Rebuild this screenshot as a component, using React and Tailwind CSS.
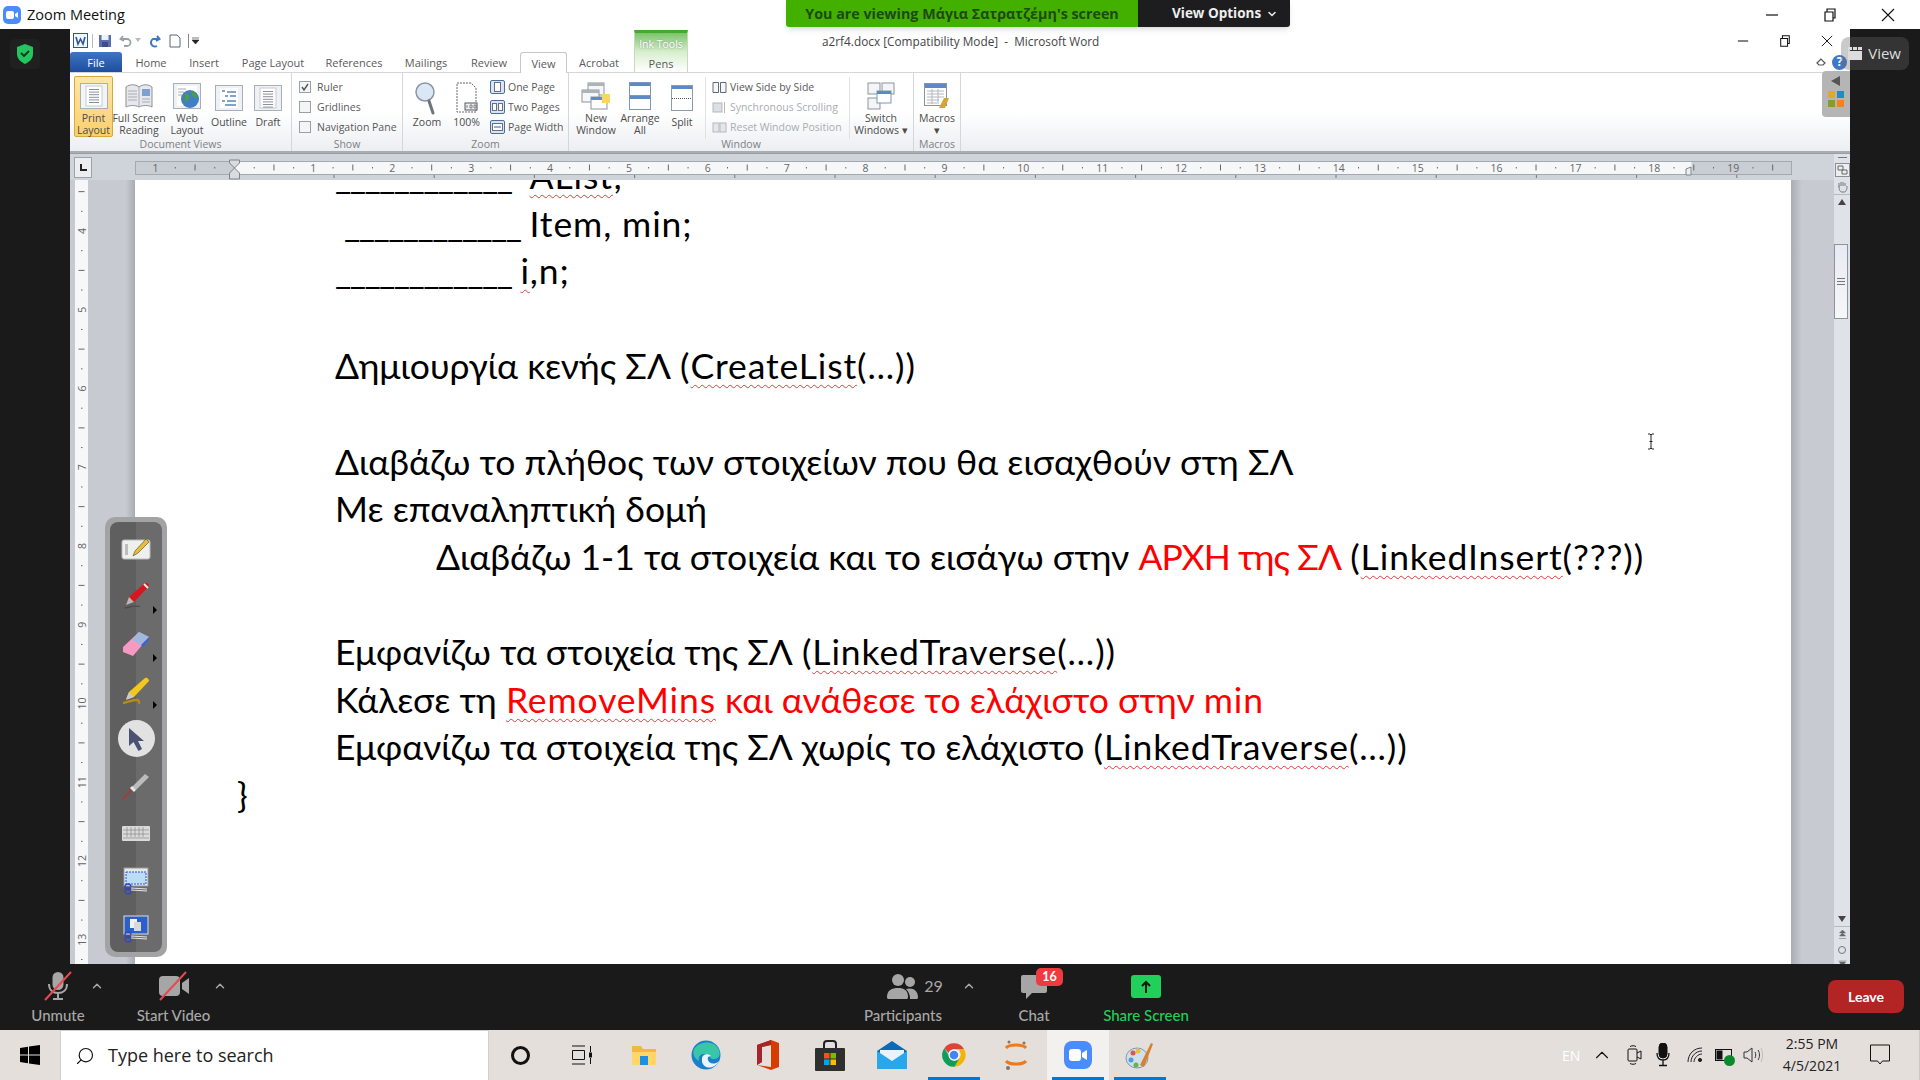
import { ChevronUp, ChevronDown, Search } from "lucide-react";

const uiFont = { fontFamily: '"Open Sans", "Noto Sans", sans-serif' };

const tabs = [
  ["Home", "w-[58px]"],
  ["Insert", "w-[48px]"],
  ["Page Layout", "w-[90px]"],
  ["References", "w-[72px]"],
  ["Mailings", "w-[72px]"],
  ["Review", "w-[54px]"],
];

function WinButtons({ size, gap, className }) {
  return (
    <div className={"flex items-center " + className} style={{ gap }}>
      <svg width={size} height={size} viewBox="0 0 14 14" fill="none" stroke="#111" strokeWidth="1.2"><path d="M1 7h12" /></svg>
      <svg width={size} height={size} viewBox="0 0 14 14" fill="none" stroke="#111" strokeWidth="1.2"><path d="M2 4h8v9H2zM4 4V1h8v9h-2" /></svg>
      <svg width={size} height={size} viewBox="0 0 14 14" fill="none" stroke="#111" strokeWidth="1.1"><path d="M1 1l12 12M13 1L1 13" /></svg>
    </div>
  );
}

function PageIcon({ lines = 6, open, globe, outline, active }) {
  return (
    <svg width="28" height="26" viewBox="0 0 28 26">
      {!open && <rect x="0.5" y="0.5" width="27" height="25" fill={active ? "#f3f4f4" : "#eef1f5"} stroke="#a9afb8" />}
      {open ? (
        <>
          <path d="M1 4c4-3 9-3 13 0c4-3 9-3 13 0v20c-4-2-9-2-13 0c-4-2-9-2-13 0z" fill="#e6e8ec" stroke="#8a8f98" />
          <path d="M14 4v20M3 8h9M3 11h9M3 14h9M3 17h9" stroke="#a6abb3" />
          <rect x="17" y="6" width="8" height="7" fill="#7da0d0" />
          <path d="M17 16h8M17 19h8" stroke="#a6abb3" />
        </>
      ) : globe ? (
        <>
          <rect x="4" y="3" width="20" height="20" fill="#fff" />
          <path d="M5 6h8M5 9h6M5 12h4" stroke="#a6abb3" />
          <circle cx="17" cy="16" r="9" fill="#3f7fc4" />
          <path d="M12 10c3 1 5 3 4 6c-1 2-3 1-4 4zM18 8c3 1 6 3 6 7c-2 0-6-2-6-7z" fill="#4fa12f" />
        </>
      ) : outline ? (
        <>
          <rect x="5" y="3" width="18" height="20" fill="#fff" />
          <path d="M7 6h3M12 7h9M10 11h3M15 11h6M7 16h3M12 16h9M10 20h11" stroke="#5b86b8" strokeWidth="1.4" />
        </>
      ) : (
        <>
          <rect x="6" y="3" width="16" height="20" fill="#fff" stroke="#c7cbd1" />
          {Array.from({ length: lines }).map((_, i) => (
            <path key={i} d={`M9 ${6.5 + i * 2.6}h10`} stroke="#8b919a" strokeWidth="1" />
          ))}
        </>
      )}
    </svg>
  );
}

function BigButton({ icon, label, label2, width, active }) {
  return (
    <div
      className={
        "flex flex-col items-center h-[61px] text-[10.5px] leading-[12px] text-[#4c4c4c] shrink-0 " +
        width +
        (active ? " rounded-[2px] border border-[#d9a83e] bg-gradient-to-b from-[#fde7a8] to-[#fbcf6a]" : " border border-transparent")
      }
    >
      <div className="h-[35px] mt-[3px] flex items-center justify-center">{icon}</div>
      <span className="whitespace-nowrap mt-[1px]">{label}</span>
      {label2 && <span className="whitespace-nowrap">{label2}</span>}
    </div>
  );
}

function Group({ title, width, children }) {
  return (
    <div className={"flex flex-col h-full shrink-0 border-r border-[#d3d6da] " + width}>
      <div className="flex-1 flex pt-[3px] min-h-0">{children}</div>
      <div className="h-[14px] text-center text-[10.5px] leading-[14px] text-[#7d8185]">{title}</div>
    </div>
  );
}

function CheckRow({ label, checked }) {
  return (
    <div className="flex items-center gap-[6px] h-[20px] text-[10.5px] leading-[14px] text-[#595959]">
      <div className="w-[12px] h-[12px] border border-[#9aa0a8] bg-[#f4f5f6] flex items-center justify-center">
        {checked && (
          <svg width="10" height="10" viewBox="0 0 10 10" fill="none" stroke="#555" strokeWidth="1.4"><path d="M2 5l2 3l4-6" /></svg>
        )}
      </div>
      <span className="whitespace-nowrap">{label}</span>
    </div>
  );
}

function SmallRow({ icon, label, dim }) {
  return (
    <div className={"flex items-center gap-[3px] h-[20px] text-[10.5px] leading-[14px] whitespace-nowrap " + (dim ? "text-[#a9adb2]" : "text-[#595959]")}>
      <div className="w-[15px] h-[14px] flex items-center justify-center">{icon}</div>
      <span>{label}</span>
    </div>
  );
}

function MiniPages({ n = 1 }) {
  return (
    <svg width="15" height="14" viewBox="0 0 15 14">
      <rect x="0.5" y="0.5" width="14" height="13" rx="1.5" fill="#dbe5f2" stroke="#4a6f9e" />
      {n === 1 ? (
        <rect x="4.5" y="2.5" width="6" height="9" fill="#fff" stroke="#67707b" />
      ) : n === 2 ? (
        <>
          <rect x="2.5" y="3.5" width="4" height="7" fill="#fff" stroke="#67707b" />
          <rect x="8.5" y="3.5" width="4" height="7" fill="#fff" stroke="#67707b" />
        </>
      ) : (
        <>
          <rect x="2.5" y="3.5" width="10" height="7" fill="#fff" stroke="#67707b" />
          <path d="M4 7h7" stroke="#2a5f9e" />
        </>
      )}
    </svg>
  );
}

function WindowPane({ kind }) {
  if (kind === "new")
    return (
      <svg width="30" height="28" viewBox="0 0 30 28">
        <rect x="7" y="1" width="16" height="12" fill="#f6f7f8" stroke="#8d939b" />
        <rect x="7" y="1" width="16" height="3" fill="#aeb3ba" />
        <rect x="1" y="8" width="17" height="12" fill="#f6f7f8" stroke="#8d939b" />
        <rect x="1" y="8" width="17" height="3" fill="#aeb3ba" />
        <rect x="10" y="15" width="16" height="12" fill="#fff" stroke="#8d939b" />
        <rect x="10" y="15" width="16" height="3" fill="#5c8ccc" />
        <rect x="21" y="12" width="8" height="9" fill="#f7d861" />
      </svg>
    );
  if (kind === "arrange")
    return (
      <svg width="22" height="28" viewBox="0 0 22 28">
        <rect x="0.5" y="0.5" width="21" height="13" fill="#fff" stroke="#7e97b6" />
        <rect x="1" y="1" width="20" height="3" fill="#5b8ac7" />
        <rect x="0.5" y="13.5" width="21" height="14" fill="#fff" stroke="#7e97b6" />
        <rect x="1" y="14" width="20" height="3" fill="#5b8ac7" />
      </svg>
    );
  if (kind === "split")
    return (
      <svg width="22" height="26" viewBox="0 0 22 26">
        <rect x="0.5" y="0.5" width="21" height="25" fill="#fff" stroke="#8d9aa8" />
        <rect x="1" y="1" width="20" height="3" fill="#5b8ac7" />
        <path d="M1 13.5h20" stroke="#555" strokeDasharray="1 1" />
      </svg>
    );
  return (
    <svg width="28" height="28" viewBox="0 0 28 28">
      <rect x="1" y="1" width="12" height="11" fill="#f4f5f6" stroke="#8d939b" />
      <rect x="15" y="1" width="12" height="11" fill="#f4f5f6" stroke="#8d939b" />
      <rect x="1" y="16" width="12" height="11" fill="#f4f5f6" stroke="#8d939b" />
      <rect x="10" y="9" width="14" height="12" fill="#fff" stroke="#7e97b6" />
      <rect x="10" y="9" width="14" height="3" fill="#5b8ac7" />
    </svg>
  );
}

function Ribbon() {
  return (
    <div className="h-[80px] flex bg-gradient-to-b from-white via-white to-[#eceef1] border-b-2 border-[#a9adb3] shrink-0" style={uiFont}>
      <Group title="Document Views" width="w-[222px]">
        <div className="flex pl-[4px]">
          <BigButton width="w-[39px]" active icon={<PageIcon active />} label="Print" label2="Layout" />
          <BigButton width="w-[52px]" icon={<PageIcon open />} label="Full Screen" label2="Reading" />
          <BigButton width="w-[44px]" icon={<PageIcon globe />} label="Web" label2="Layout" />
          <BigButton width="w-[40px]" icon={<PageIcon outline />} label="Outline" />
          <BigButton width="w-[38px]" icon={<PageIcon lines={7} />} label="Draft" />
        </div>
      </Group>
      <Group title="Show" width="w-[111px]">
        <div className="flex flex-col pl-[7px] pt-[1px]">
          <CheckRow label="Ruler" checked />
          <CheckRow label="Gridlines" />
          <CheckRow label="Navigation Pane" />
        </div>
      </Group>
      <Group title="Zoom" width="w-[166px]">
        <div className="flex pl-[4px]">
          <BigButton
            width="w-[40px]"
            icon={
              <svg width="24" height="34" viewBox="0 0 24 34">
                <circle cx="10" cy="11" r="9" fill="#dbe7f5" stroke="#8a96a5" strokeWidth="1.5" />
                <path d="M14 20l4 12" stroke="#6e747b" strokeWidth="3" strokeLinecap="round" />
              </svg>
            }
            label="Zoom"
          />
          <BigButton
            width="w-[39px]"
            icon={
              <svg width="24" height="32" viewBox="0 0 24 32" fill="none">
                <path d="M2 1h14l5 5v24H2z" fill="#fff" stroke="#666" strokeDasharray="2 1" />
                <rect x="10" y="21" width="12" height="7" fill="#eef1f5" stroke="#555" />
                <path d="M12 26v-3M15 23h2v3h-2zM19 23h2v3h-2z" stroke="#555" strokeWidth="0.7" />
              </svg>
            }
            label="100%"
          />
          <div className="flex flex-col pl-[4px] pt-[1px]">
            <SmallRow icon={<MiniPages n={1} />} label="One Page" />
            <SmallRow icon={<MiniPages n={2} />} label="Two Pages" />
            <SmallRow icon={<MiniPages n={3} />} label="Page Width" />
          </div>
        </div>
      </Group>
      <Group title="Window" width="w-[345px]">
        <div className="flex pl-[7px]">
          <BigButton width="w-[40px]" icon={<WindowPane kind="new" />} label="New" label2="Window" />
          <BigButton width="w-[48px]" icon={<WindowPane kind="arrange" />} label="Arrange" label2="All" />
          <BigButton width="w-[36px]" icon={<WindowPane kind="split" />} label="Split" />
          <div className="w-px h-[62px] bg-[#dfe1e4] ml-[5px] mt-[1px]" />
          <div className="flex flex-col pl-[6px] pt-[1px] w-[143px]">
            <SmallRow
              icon={
                <svg width="15" height="13" viewBox="0 0 15 13" fill="none" stroke="#5f6a76"><path d="M1 1.5h5.5v10H1zM8.5 1.5H14v10H8.5z" fill="#f6f7f9" /></svg>
              }
              label="View Side by Side"
            />
            <SmallRow
              dim
              icon={
                <svg width="15" height="13" viewBox="0 0 15 13" stroke="#b4b8bd"><rect x="1" y="2" width="9" height="9" fill="#dcdfe3" /><path d="M12.5 1v11" /></svg>
              }
              label="Synchronous Scrolling"
            />
            <SmallRow
              dim
              icon={
                <svg width="15" height="13" viewBox="0 0 15 13" stroke="#b4b8bd"><rect x="1" y="2" width="6" height="9" fill="#e4e6e9" /><rect x="8" y="2" width="6" height="9" fill="#e4e6e9" /></svg>
              }
              label="Reset Window Position"
            />
          </div>
          <div className="w-px h-[62px] bg-[#dfe1e4] mt-[1px]" />
          <BigButton width="w-[62px]" icon={<WindowPane kind="switch" />} label="Switch" label2="Windows ▾" />
        </div>
      </Group>
      <Group title="Macros" width="w-[47px]">
        <BigButton
          width="w-full"
          icon={
            <svg width="26" height="28" viewBox="0 0 26 28">
              <rect x="0.5" y="1.5" width="22" height="22" fill="#fff" stroke="#8d939b" />
              <rect x="1" y="2" width="21" height="4" fill="#5b8ac7" />
              <path d="M3 9h17M3 12h17M3 15h17M3 18h12M3 21h10M8 7v15M14 7v15" stroke="#b3b8bf" />
              <path d="M15 26l5-10h5l-4 10z" fill="#d6a535" />
            </svg>
          }
          label="Macros"
          label2="▾"
        />
      </Group>
    </div>
  );
}

function HRuler() {
  const unit = 78.88;
  const zero = 99.5;
  const nums = [];
  for (let n = -1; n <= 19; n++) if (n !== 0) nums.push(n);
  const ticks = [];
  for (let i = -4; i <= 78; i++) if (i % 4 !== 0) ticks.push(i);
  return (
    <div className="h-[27px] bg-[#cfd3da] flex shrink-0 border-t border-[#9a9ea4]">
      <div className="w-[4px]" />
      <div className="w-[18px] h-[21px] mt-[3px] border border-[#9ea3aa] bg-[#eceef1] flex items-center justify-center shrink-0">
        <svg width="9" height="9" viewBox="0 0 9 9"><path d="M2 1v6h6" fill="none" stroke="#222" strokeWidth="2" /></svg>
      </div>
      <div className="w-[43px]" />
      <svg width="1660" height="26" viewBox="0 0 1660 26" className="shrink-0">
        <rect x="0.5" y="7.5" width="1656" height="13" fill="#c9cdd4" stroke="#a4a8af" />
        <rect x={zero} y="8" width="1457" height="12" fill="#f6f7f8" />
        {ticks.map((i) => {
          const x = zero + (i * unit) / 4;
          if (x < 3 || x > 1654) return null;
          return i % 2 === 0 ? (
            <path key={i} d={`M${x} 10.5v6`} stroke="#666" />
          ) : (
            <path key={i} d={`M${x} 13v1.5`} stroke="#666" />
          );
        })}
        {nums.map((n) => (
          <text key={n} x={zero + n * unit} y="18" textAnchor="middle" fontSize="10.5" fill="#666" style={uiFont}>
            {Math.abs(n)}
          </text>
        ))}
        {Array.from({ length: 16 }).map((_, i) => (
          <path key={i} d={`M${199 + i * 100.2} 21v3`} stroke="#777" />
        ))}
        <path d={`M${zero - 5} 6h10v3l-5 5l-5-5z`} fill="#d8dbe0" stroke="#808489" />
        <path d={`M${zero} 14l5 5v6h-10v-6z`} fill="#d8dbe0" stroke="#808489" />
        <path d="M1551 21v-6l5-2v8z" fill="#eceef1" stroke="#808489" />
      </svg>
      <div className="flex-1" />
      <div className="w-[16px] bg-[#dfe2e8] flex flex-col items-center shrink-0 pt-[3px]">
        <div className="w-[9px] h-px bg-[#777]" />
        <div className="mt-[5px] w-[15px] h-[14px] border border-[#8a8f96] bg-[#eceef1] flex items-center justify-center">
          <svg width="11" height="10" viewBox="0 0 11 10" fill="none" stroke="#666"><path d="M1 1h5v4H1zM5 5h5v4H5z" /></svg>
        </div>
      </div>
    </div>
  );
}

function VRuler() {
  const unit = 78.75;
  const nums = [3, 4, 5, 6, 7, 8, 9, 10, 11, 12, 13];
  const top = 231 - 180 - 78.75;
  const ticks = [];
  for (let i = 0; i < 52; i++) if (i % 4 !== 0) ticks.push(i);
  return (
    <svg width="13" height="784" viewBox="0 0 13 784" className="shrink-0 bg-[#f6f7f8]">
      {ticks.map((i) => {
        const y = top + (i * unit) / 4;
        return i % 2 === 0 ? (
          <path key={i} d={`M3.5 ${y}h6`} stroke="#666" />
        ) : (
          <path key={i} d={`M6 ${y}h1.5`} stroke="#666" />
        );
      })}
      {nums.map((n, i) => {
        const y = top + i * unit;
        return (
          <text key={n} x="6.5" y={y} textAnchor="middle" dominantBaseline="central" fontSize="10.5" fill="#666" transform={`rotate(-90 6.5 ${y})`} style={uiFont}>
            {n}
          </text>
        );
      })}
    </svg>
  );
}

function Lat({ children }) {
  return <span className="tracking-[0.9px]">{children}</span>;
}

function Wavy({ children }) {
  return <span className="underline decoration-wavy decoration-[#e5383b] decoration-1 underline-offset-[5px]">{children}</span>;
}

function Blank() {
  return <span className="tracking-[-1.6px]">____________</span>;
}

function Line({ children, className = "" }) {
  return <div className={"h-[47.6px] leading-[47.6px] whitespace-pre " + className}>{children}</div>;
}

function Paper() {
  return (
    <div
      className="flex-1 bg-white overflow-hidden pl-[200px] text-black text-[35.5px]"
      style={{ fontFamily: '"Lato", "Open Sans", sans-serif' }}
    >
      <div className="-mt-[28px]">
        <Line><Blank />  <Lat><Wavy>AList</Wavy>;</Lat></Line>
        <Line> <Blank /> <Lat>Item, min;</Lat></Line>
        <Line><Blank /> <Lat><Wavy>i</Wavy>,n;</Lat></Line>
        <Line />
        <Line>Δημιουργία κενής ΣΛ <Lat>(<Wavy>CreateList</Wavy>(…))</Lat></Line>
        <Line />
        <Line>Διαβάζω το πλήθος των στοιχείων που θα εισαχθούν στη ΣΛ</Line>
        <Line>Με επαναληπτική δομή</Line>
        <Line className="pl-[101px]">
          Διαβάζω 1-1 τα στοιχεία και το εισάγω στην <span className="text-[#f00] tracking-[-0.9px]">ΑΡΧΗ της ΣΛ</span> <Lat>(<Wavy>LinkedInsert</Wavy>(???))</Lat>
        </Line>
        <Line />
        <Line>Εμφανίζω τα στοιχεία της ΣΛ <Lat>(<Wavy>LinkedTraverse</Wavy>(…))</Lat></Line>
        <Line>
          Κάλεσε τη <span className="text-[#f00]"><Lat><Wavy>RemoveMins</Wavy></Lat> και ανάθεσε το ελάχιστο στην <Lat>min</Lat></span>
        </Line>
        <Line>Εμφανίζω τα στοιχεία της ΣΛ χωρίς το ελάχιστο <Lat>(<Wavy>LinkedTraverse</Wavy>(…))</Lat></Line>
        <Line className="-ml-[98px]">{"}"}</Line>
      </div>
    </div>
  );
}

function Scrollbar() {
  return (
    <div className="w-[16px] bg-[#dfe2e8] flex flex-col items-center shrink-0">
      <svg width="13" height="13" viewBox="0 0 13 13" fill="none" stroke="#777" className="shrink-0"><path d="M3 7V3M5 6V2M7 6V2M9 6V3M3 6c0 4 1 6 3 6h2c2 0 3-2 3-6" /></svg>
      <div className="w-full h-px bg-[#b5b9c0] mt-[1px]" />
      <svg width="10" height="8" viewBox="0 0 10 8" className="mt-[3px] shrink-0"><path d="M5 1l4 6H1z" fill="#444" /></svg>
      <div className="mt-[38px] h-[75px] w-[14px] -ml-[2px] bg-gradient-to-b from-[#e8ebf2] to-[#f6f7f9] border border-[#8d939b] flex items-center justify-center shrink-0">
        <div className="w-[8px] h-[7px] border-y border-[#777] relative">
          <div className="absolute left-0 right-0 top-[2px] h-px bg-[#777]" />
        </div>
      </div>
      <div className="flex-1" />
      <svg width="10" height="8" viewBox="0 0 10 8" className="shrink-0"><path d="M5 7l4-6H1z" fill="#444" /></svg>
      <div className="w-full h-px bg-[#b5b9c0] mt-[3px]" />
      <svg width="9" height="10" viewBox="0 0 9 10" className="mt-[3px] shrink-0"><path d="M4.5 0l3 3h-6zM4.5 3l3 3h-6zM1 8.5h7" fill="#666" stroke="#666" strokeWidth="0.5" /></svg>
      <svg width="10" height="10" viewBox="0 0 10 10" className="mt-[5px] shrink-0"><circle cx="5" cy="5" r="3.5" fill="none" stroke="#777" /></svg>
      <svg width="9" height="8" viewBox="0 0 9 8" className="mt-[5px] mb-[-4px] shrink-0"><path d="M0.5 1h8M4.5 7l3-5h-6z" fill="#666" stroke="#666" strokeWidth="0.5" /></svg>
    </div>
  );
}

function WordWindow() {
  return (
    <div className="w-[1780px] bg-white flex flex-col relative shrink-0">
      <div className="h-[23px] flex items-center pl-[3px] shrink-0">
        <svg width="15" height="15" viewBox="0 0 15 15"><rect x="0.5" y="0.5" width="14" height="14" fill="#f3f6fa" stroke="#2b579a" /><path d="M3 4l2 7l2.5-5l2.5 5l2-7" fill="none" stroke="#2b579a" strokeWidth="1.6" /></svg>
        <div className="w-px h-[14px] bg-[#b7bbc0] ml-[4px] mr-[5px]" />
        <svg width="14" height="14" viewBox="0 0 14 14"><rect x="1" y="1" width="12" height="12" fill="#5a6fb0" /><rect x="3.5" y="1" width="7" height="5" fill="#eef1f7" /><rect x="4" y="8" width="6" height="5" fill="#3f4f85" /></svg>
        <svg width="14" height="14" viewBox="0 0 14 14" fill="none" className="ml-[7px]"><path d="M4 2L1.5 5L5 7M2 5h6a3 3 0 010 7H5" stroke="#9aa0a8" strokeWidth="1.8" /></svg>
        <svg width="6" height="5" viewBox="0 0 6 5" className="ml-[2px]"><path d="M0 0h6L3 4z" fill="#bbb" /></svg>
        <svg width="14" height="14" viewBox="0 0 14 14" fill="none" className="ml-[6px]"><path d="M10 2L12.5 5L9 7M12 5H6a4 4 0 104 7" stroke="#3d77c4" strokeWidth="2" /></svg>
        <svg width="12" height="14" viewBox="0 0 12 14" className="ml-[8px]"><path d="M1 1h7l3 3v9H1z" fill="#fff" stroke="#5b6470" /></svg>
        <div className="w-px h-[14px] bg-[#888] ml-[7px] mr-[3px]" />
        <svg width="7" height="8" viewBox="0 0 7 8"><path d="M0 1h7M0 3h7l-3.5 4z" fill="#222" stroke="#222" strokeWidth="0.6" /></svg>
        <div className="w-[623px]" />
        <span className="text-[11.8px] text-[#444] whitespace-pre pt-[2px]" style={uiFont}>a2rf4.docx [Compatibility Mode]  -  Microsoft Word</span>
        <div className="flex-1" />
        <WinButtons size={12} gap={30} className="pr-[17px]" />
      </div>
      <div className="h-[21px] flex items-stretch shrink-0 text-[11px] text-[#5a5a5a] border-b border-[#d4d6da]" style={uiFont}>
        <div className="w-[52px] rounded-t-[3px] bg-gradient-to-b from-[#3f73c4] to-[#1e4f9e] text-white flex items-center justify-center pt-[2px]">File</div>
        {tabs.map(([name, w]) => (
          <div key={name} className={w + " flex items-center justify-center whitespace-nowrap pt-[2px]"}>{name}</div>
        ))}
        <div className="w-[47px] -mb-px ml-[4px] bg-white border border-b-0 border-[#c4c7cc] rounded-t-[3px] flex items-center justify-center pt-[2px]">View</div>
        <div className="w-[64px] flex items-center justify-center pt-[2px]">Acrobat</div>
        <div className="w-[54px] ml-[3px] -mt-[22px] border-x border-[#c5dcb9] flex flex-col items-center bg-gradient-to-b from-[#7bc46a] via-[#d9efd0] to-white border-t-[3px] border-t-[#45a82f]">
          <span className="h-[20px] flex items-end text-white text-[10.5px] [text-shadow:0_0_2px_#888]">Ink Tools</span>
          <span className="h-[20px] flex items-end">Pens</span>
        </div>
        <div className="flex-1" />
        <div className="flex items-center gap-[6px] pr-[3px]">
          <svg width="10" height="10" viewBox="0 0 10 10" fill="none" stroke="#555" strokeWidth="1.2"><path d="M1 6l4-4l4 4l-2 2H3z" /></svg>
          <div className="w-[15px] h-[15px] rounded-full bg-[#3f78c8] text-white text-[12px] font-bold flex items-center justify-center">?</div>
        </div>
      </div>
      <Ribbon />
      <HRuler />
      <div className="flex-1 flex min-h-0 bg-[#c7cbd1]">
        <div className="w-[5px]" />
        <VRuler />
        <div className="w-[47px] bg-gradient-to-r from-[#c7cbd1] from-[80%] to-[#a9adb3]" />
        <Paper />
        <div className="w-[43px] bg-gradient-to-r from-[#a9adb3] to-[#c7cbd1] to-[25%]" />
        <Scrollbar />
      </div>
      {/* floating add-in palette */}
      <div className="absolute right-0 top-[42px] w-[28px] h-[46px] bg-[#b5b5b5] rounded-l-[4px] flex flex-col items-center pt-[5px]">
        <svg width="10" height="10" viewBox="0 0 10 10"><path d="M9 0v10L0 5z" fill="#555" /></svg>
        <div className="grid grid-cols-2 gap-[2px] mt-[5px]">
          <div className="w-[7px] h-[7px] bg-[#e5a91e]" />
          <div className="w-[7px] h-[7px] bg-[#1b8fc0]" />
          <div className="w-[7px] h-[7px] bg-[#8a9a2e]" />
          <div className="w-[7px] h-[7px] bg-[#ee8427]" />
        </div>
      </div>
      <div className="absolute left-[1577px] top-[404px]">
        <svg width="8" height="17" viewBox="0 0 8 17" fill="none" stroke="#222"><path d="M1 1h2l1 1l1-1h2M4 2v13M1 16h2l1-1l1 1h2M2.5 8.5h3" /></svg>
      </div>
    </div>
  );
}

function Tool({ children, arrow }) {
  return (
    <div className="h-[47.5px] w-full flex items-center justify-center relative shrink-0">
      {children}
      {arrow && <div className="absolute right-[5px] bottom-[6px] w-0 h-0 border-y-[4px] border-y-transparent border-l-[4px] border-l-black" />}
    </div>
  );
}

function AnnotateBar() {
  return (
    <div className="absolute left-[105px] top-[517px] w-[62px] h-[440px] rounded-[10px] bg-[#a3a3a6] p-[5px]">
      <div className="w-full h-full rounded-[8px] bg-gradient-to-r from-[#5f5f5f] from-50% to-[#6b6b6b] to-50% flex flex-col items-center pt-[3px]">
        <Tool>
          <svg width="30" height="24" viewBox="0 0 30 24"><rect x="1" y="3" width="28" height="19" rx="2" fill="#eef0ee" stroke="#bbb" /><rect x="4" y="7" width="3" height="11" fill="#bdbdbd" /><path d="M12 19l2-5L25 2l3 3l-11 11z" fill="#e7bd3a" stroke="#6b5b20" strokeWidth="0.7" /></svg>
        </Tool>
        <Tool arrow>
          <svg width="30" height="30" viewBox="0 0 30 30"><path d="M5 23l3-7L24 2c2-1 4 1 4 3L13 21z" fill="#d9161d" /><path d="M23 3l4 4" stroke="#eee" strokeWidth="2" /><path d="M5 24l3-8l5 5z" fill="#b9b9b9" /><path d="M3 27c5 0 7-2 11-2c2 0 3 1 5 0" fill="none" stroke="#4a4a4a" strokeWidth="1.2" /></svg>
        </Tool>
        <Tool arrow>
          <svg width="30" height="30" viewBox="0 0 30 30"><path d="M2 18L18 3l10 5L12 27L2 23z" fill="#f69ac1" /><path d="M18 3l10 5l-8 8l-9-5z" fill="#9fb9dd" /><path d="M28 8v3l-6 7l-2-2z" fill="#3b63d3" /></svg>
        </Tool>
        <Tool arrow>
          <svg width="30" height="30" viewBox="0 0 30 30"><path d="M5 23l3-7L24 2c2-1 4 1 4 3L13 21z" fill="#f2c81c" /><path d="M5 24l3-8l5 5z" fill="#c9c9c9" /><path d="M2 27c6-1 9-3 14-3c3 0 1 3 3 3" fill="none" stroke="#b98a17" strokeWidth="2.5" /></svg>
        </Tool>
        <Tool>
          <div className="w-[37px] h-[37px] rounded-full bg-[#e2e2e2] flex items-center justify-center">
            <svg width="18" height="24" viewBox="0 0 18 24"><path d="M2 1v18l4.5-4l5 9l3.5-2l-4-8h6z" fill="#4d5273" /></svg>
          </div>
        </Tool>
        <Tool>
          <svg width="30" height="30" viewBox="0 0 30 30"><path d="M11 16L24 3l4 3l-13 13z" fill="#bcbcbc" /><path d="M10 16l4 4" stroke="#e8e8e8" strokeWidth="3" /><path d="M10 19l-8 9" stroke="#b8332c" strokeWidth="1.5" /></svg>
        </Tool>
        <Tool>
          <svg width="28" height="16" viewBox="0 0 28 16"><rect width="28" height="15" rx="1" fill="#dadada" /><path d="M1 4h26M1 8h26M1 12h26M5 1v10M9 1v10M13 1v10M17 1v10M21 1v10" stroke="#8a8a8a" strokeWidth="0.7" /></svg>
        </Tool>
        <Tool>
          <svg width="26" height="28" viewBox="0 0 26 28"><rect x="1" y="1" width="24" height="18" fill="#e8e8e8" stroke="#999" /><rect x="3" y="5" width="20" height="12" fill="#bcdcf7" stroke="#1f55dd" strokeDasharray="2 1" /><circle cx="5" cy="24" r="3" fill="none" stroke="#3249b5" strokeWidth="1.3" /><circle cx="5" cy="20" r="3" fill="none" stroke="#3249b5" strokeWidth="1.3" /><path d="M8 21l16 1M8 23l16 1" stroke="#e4e4e4" strokeWidth="1.2" /></svg>
        </Tool>
        <Tool>
          <svg width="26" height="28" viewBox="0 0 26 28"><rect x="1" y="1" width="24" height="18" fill="#2d60c6" stroke="#ddd" /><rect x="7" y="4" width="7" height="9" fill="#f1f1f1" /><rect x="11" y="7" width="7" height="9" fill="#d8d8d8" /><circle cx="5" cy="24" r="3" fill="none" stroke="#3249b5" strokeWidth="1.3" /><circle cx="5" cy="20" r="3" fill="none" stroke="#3249b5" strokeWidth="1.3" /><path d="M8 21l16 1M8 23l16 1" stroke="#e4e4e4" strokeWidth="1.2" /></svg>
        </Tool>
      </div>
    </div>
  );
}

function ToolbarLabel({ children, green }) {
  return <span className={"text-[15px] leading-[18px] font-medium whitespace-nowrap " + (green ? "text-[#21d05a]" : "text-[#a8a8a8]")}>{children}</span>;
}

function ZoomBar() {
  return (
    <div className="h-[66px] bg-[#1a1a1a] flex items-start shrink-0 relative" style={{ fontFamily: '"Lato", "Open Sans", sans-serif' }}>
      <div className="w-[116px] pt-[7px] flex flex-col items-center">
        <svg width="30" height="30" viewBox="0 0 30 30">
          <rect x="9.5" y="1" width="11" height="18" rx="5.5" fill="#a6a6a6" />
          <path d="M6 13c0 6 4 9 9 9s9-3 9-9M15 22v5M10 28h10" fill="none" stroke="#a6a6a6" strokeWidth="2" />
          <path d="M2 29L28 1" stroke="#e8494f" strokeWidth="2" />
        </svg>
        <div className="mt-[2px]"><ToolbarLabel>Unmute</ToolbarLabel></div>
      </div>
      <ChevronUp size={14} strokeWidth={2.5} className="text-[#a8a8a8] absolute left-[90px] top-[15px]" />
      <div className="w-[115px] pt-[7px] flex flex-col items-center">
        <svg width="32" height="30" viewBox="0 0 32 30">
          <rect x="1" y="5" width="21" height="20" rx="4" fill="#a6a6a6" />
          <path d="M24 12l7-5v16l-7-5z" fill="#a6a6a6" />
          <path d="M2 29L28 1" stroke="#e8494f" strokeWidth="2" />
        </svg>
        <div className="mt-[2px]"><ToolbarLabel>Start Video</ToolbarLabel></div>
      </div>
      <ChevronUp size={14} strokeWidth={2.5} className="text-[#a8a8a8] absolute left-[213px] top-[15px]" />

      <div className="ml-[617px] w-[110px] pt-[7px] flex flex-col items-center">
        <div className="h-[30px] flex items-center gap-[6px] pl-[24px]">
          <svg width="31" height="28" viewBox="0 0 31 28" fill="#a6a6a6">
            <circle cx="11" cy="8" r="6" />
            <path d="M0 25c0-7 5-9 11-9s10 2 10 9c0 2-1 2-2 2H2c-1 0-2 0-2-2z" />
            <circle cx="23" cy="10" r="5" />
            <path d="M19 17c6-2 12 1 12 8c0 2-1 2-2 2h-6c0-4-1-7-4-10z" />
          </svg>
          <span className="text-[16px] text-[#a8a8a8]">29</span>
        </div>
        <div className="mt-[2px]"><ToolbarLabel>Participants</ToolbarLabel></div>
      </div>
      <ChevronUp size={14} strokeWidth={2.5} className="text-[#a8a8a8] absolute left-[962px] top-[15px]" />
      <div className="ml-[40px] w-[72px] pt-[7px] flex flex-col items-center relative">
        <svg width="28" height="30" viewBox="0 0 28 30">
          <path d="M3 4h22a2 2 0 012 2v14a2 2 0 01-2 2H12l-6 6v-6H3a2 2 0 01-2-2V6a2 2 0 012-2z" fill="#a6a6a6" />
        </svg>
        <div className="absolute left-[38px] top-[4px] w-[27px] h-[18px] rounded-[5px] bg-[#ef3b3f] text-white text-[12.5px] font-bold leading-[18px] text-center">16</div>
        <div className="mt-[2px]"><ToolbarLabel>Chat</ToolbarLabel></div>
      </div>
      <div className="ml-[21px] w-[110px] pt-[11px] flex flex-col items-center">
        <div className="w-[30px] h-[23px] rounded-[3px] bg-[#21d05a] flex items-center justify-center">
          <svg width="12" height="14" viewBox="0 0 12 14" fill="none" stroke="#0d1a10" strokeWidth="2"><path d="M6 13V2M2 6l4-4l4 4" /></svg>
        </div>
        <div className="mt-[5px]"><ToolbarLabel green>Share Screen</ToolbarLabel></div>
      </div>
      <div className="flex-1" />
      <div className="mt-[16px] mr-[16px] w-[76px] h-[33px] rounded-[8px] bg-[#b32424] text-white text-[14px] font-bold flex items-center justify-center">Leave</div>
    </div>
  );
}

function Slot({ children, active, highlight }) {
  return (
    <div className={"w-[62px] h-full flex items-center justify-center relative shrink-0 " + (highlight ? "bg-[#f3f1f0]" : "")}>
      {children}
      {active && <div className="absolute bottom-0 left-[5px] right-[5px] h-[3px] bg-[#0078d4]" />}
    </div>
  );
}

function Taskbar() {
  return (
    <div className="h-[50px] bg-[#e5dfdc] flex items-center shrink-0" style={uiFont}>
      <div className="w-[60px] flex items-center justify-center">
        <svg width="20" height="20" viewBox="0 0 20 20" fill="#000"><path d="M0 3l8-1.2V9.5H0zM9 1.6L20 0v9.5H9zM0 10.5h8v7.7L0 17zM9 10.5h11V20L9 18.4z" /></svg>
      </div>
      <div className="w-[429px] h-full bg-white border-x border-t border-[#cfcfcf] flex items-center pl-[14px] gap-[13px] text-[18px] text-[#222]">
        <Search size={20} strokeWidth={1.4} className="-scale-x-100 text-[#111]" />
        <span>Type here to search</span>
      </div>
      <Slot>
        <div className="w-[19px] h-[19px] rounded-full border-[3px] border-[#111]" />
      </Slot>
      <Slot>
        <svg width="22" height="20" viewBox="0 0 22 20" fill="none" stroke="#111"><path d="M1 1h13M1 19h13M1.5 5.5h12v9h-12zM19.5 1v6M19.5 13v6" /><rect x="18.5" y="8" width="2" height="4" fill="#111" /></svg>
      </Slot>
      <Slot>
        <svg width="26" height="24" viewBox="0 0 26 24"><path d="M1 3h9l2 3h13v16H1z" fill="#f4b83f" /><path d="M1 9h24v13H1z" fill="#ffd667" /><rect x="9" y="13" width="8" height="9" fill="#1f8fe0" /></svg>
      </Slot>
      <Slot>
        <svg width="30" height="30" viewBox="0 0 30 30"><circle cx="15" cy="15" r="14.5" fill="#1a7fcf" /><path d="M3 9C7 2 21-1 27 8c3 5 2 10-3 11c-6 1-5-5-11-5c-4 0-6 3-5 7c-4-2-7-7-5-12z" fill="#38c6a6" /><path d="M11 19c0-5 6-6 9-3c-2 0-4 1-3 4c1 4 7 5 11 1c-3 7-14 10-17 1z" fill="#e9f4fb" /></svg>
      </Slot>
      <Slot>
        <svg width="24" height="30" viewBox="0 0 24 30"><path d="M1 5L15 0l8 3v24l-8 3L1 25l14 2V5L6 7v15l-5 3z" fill="#d83b01" /><path d="M1 5L15 0v5L6 7v15l-5 3z" fill="#a4262c" /></svg>
      </Slot>
      <Slot>
        <svg width="30" height="32" viewBox="0 0 30 32"><path d="M9 9V5a3 3 0 013-3h6a3 3 0 013 3v4" fill="none" stroke="#222" strokeWidth="2" /><rect y="9" width="30" height="23" rx="1" fill="#2f2f2f" /><rect x="9" y="14" width="5.5" height="5.5" fill="#f25022" /><rect x="15.5" y="14" width="5.5" height="5.5" fill="#7fba00" /><rect x="9" y="20.5" width="5.5" height="5.5" fill="#00a4ef" /><rect x="15.5" y="20.5" width="5.5" height="5.5" fill="#ffb900" /></svg>
      </Slot>
      <Slot>
        <svg width="30" height="28" viewBox="0 0 30 28"><path d="M0 10L15 0l15 10v18H0z" fill="#0a6cb8" /><path d="M3 9h24v8l-12 6L3 17z" fill="#eaf3fb" /><path d="M0 10l15 10l15-10v18H0z" fill="#28a8ea" /></svg>
      </Slot>
      <Slot active>
        <svg width="28" height="28" viewBox="0 0 48 48">
          <path d="M24 4a20 20 0 0117.3 10H24a10 10 0 00-9.4 6.6L7.4 12.4A20 20 0 0124 4z" fill="#db4437" />
          <path d="M41.3 14A20 20 0 0125 44l8.6-15A10 10 0 0034 18a10 10 0 00-1.3-4z" fill="#f4b400" />
          <path d="M7.4 12.4A20 20 0 0025 44l8.6-15A10 10 0 0115 24z" fill="#0f9d58" />
          <circle cx="24" cy="24" r="8.5" fill="#4285f4" stroke="#fff" strokeWidth="2" />
        </svg>
      </Slot>
      <Slot>
        <svg width="24" height="30" viewBox="0 0 24 30" fill="none"><path d="M2 8c3-4 17-4 20 0" stroke="#ee7a1f" strokeWidth="3" /><path d="M2 21c3 4 17 4 20 0" stroke="#ee7a1f" strokeWidth="3" /><circle cx="5" cy="2" r="1.5" fill="#777" /><circle cx="20" cy="3" r="1.5" fill="#777" /><circle cx="4" cy="28" r="2" fill="#777" /></svg>
      </Slot>
      <Slot active highlight>
        <div className="w-[28px] h-[28px] rounded-[8px] bg-[#4a8cff] flex items-center justify-center">
          <svg width="18" height="12" viewBox="0 0 18 12" fill="#fff"><rect width="12" height="12" rx="3" /><path d="M13 4l5-3v10l-5-3z" /></svg>
        </div>
      </Slot>
      <Slot active>
        <svg width="30" height="30" viewBox="0 0 30 30"><ellipse cx="12" cy="18" rx="11" ry="10" fill="#cfe0ec" stroke="#7b9bb0" /><circle cx="8" cy="13" r="2.5" fill="#e2534b" /><circle cx="13" cy="11" r="2.5" fill="#e8c13b" /><circle cx="6" cy="20" r="2.5" fill="#4f9dd9" /><circle cx="11" cy="25" r="2.5" fill="#6bb04a" /><path d="M15 25L26 3l2 1l-9 23z" fill="#d88030" /></svg>
      </Slot>
      <div className="flex-1" />
      <span className="text-[14px] text-white w-[24px]">EN</span>
      <div className="flex items-center text-[#111]">
        <ChevronUp size={22} strokeWidth={1.2} className="ml-[5px]" />
        <svg width="16" height="20" viewBox="0 0 16 20" fill="none" stroke="#111" className="ml-[14px]"><rect x="1" y="4" width="9" height="12" rx="1" /><path d="M10 8l4-2v8l-4-2" /><path d="M3 1.5c2-1 4-1 6 0M3 18.5c2 1 4 1 6 0" /></svg>
        <svg width="14" height="24" viewBox="0 0 14 24" className="ml-[13px]" fill="none" stroke="#111"><rect x="3" y="0" width="8" height="15" rx="4" fill="#111" /><path d="M1 10c0 5 3 7 6 7s6-2 6-7M7 17v5M3 22.5h8" strokeWidth="1.3" /></svg>
        <svg width="16" height="16" viewBox="0 0 16 16" fill="none" stroke="#222" className="ml-[17px]"><path d="M1 15C1 7 7 1 15 1M4 15C4 9 9 4 15 4M7 15c0-4 4-8 8-8" /><circle cx="13" cy="13" r="1.6" fill="#222" /></svg>
        <div className="relative ml-[12px]">
          <svg width="18" height="12" viewBox="0 0 18 12" fill="none" stroke="#111"><rect x="0.5" y="0.5" width="16" height="11" /><rect x="2" y="2" width="5" height="8" fill="#111" /></svg>
          <div className="absolute -right-[2px] -bottom-[5px] w-[11px] h-[11px] rounded-full bg-[#0c8a2b]" />
        </div>
        <svg width="20" height="18" viewBox="0 0 20 18" fill="none" stroke="#333" className="ml-[10px]"><path d="M1 6h3l5-4v14l-5-4H1zM12 6c1 2 1 4 0 6M15 4c2 3 2 7 0 10" /><path d="M18 2c2 4 2 10 0 14" stroke="#bbb" /></svg>
      </div>
      <div className="w-[76px] ml-[11px] flex flex-col items-center text-[14px] leading-[22px] text-[#222]">
        <span>2:55 PM</span>
        <span>4/5/2021</span>
      </div>
      <div className="w-[69px] pl-[20px]">
        <svg width="20" height="22" viewBox="0 0 20 22" fill="none" stroke="#111"><path d="M0.5 1h19v16h-7l-2.5 3l-2.5-3h-7z" /></svg>
      </div>
      <div className="w-px h-full bg-[#cfc9c6]" />
    </div>
  );
}

export default function App() {
  return (
    <div className="w-[1920px] h-[1080px] flex flex-col overflow-hidden relative bg-[#1a1a1a]">
      <div className="h-[29px] bg-white flex items-center shrink-0">
        <div className="ml-[3px] w-[18px] h-[18px] rounded-[5px] bg-[#4a8cff] flex items-center justify-center">
          <svg width="12" height="8" viewBox="0 0 12 8" fill="#fff"><rect width="8" height="8" rx="2" /><path d="M9 3l3-2v6l-3-2z" /></svg>
        </div>
        <span className="ml-[6px] text-[14.5px] text-[#111]" style={uiFont}>Zoom Meeting</span>
        <div className="flex-1" />
        <WinButtons size={14} gap={44} className="pr-[25px]" />
      </div>
      <div className="flex flex-1 min-h-0">
        <div className="w-[70px] shrink-0 pt-[10px] pl-[10px]">
          <div className="w-[30px] h-[30px] rounded-[5px] bg-[#202020] flex items-center justify-center">
            <svg width="16" height="20" viewBox="0 0 16 20"><path d="M8 0l8 3v7c0 5-4 8-8 10c-4-2-8-5-8-10V3z" fill="#22c55e" /><path d="M4 9l3 3l5-5" fill="none" stroke="#10351c" strokeWidth="1.8" /></svg>
          </div>
        </div>
        <WordWindow />
        <div className="flex-1" />
      </div>
      <ZoomBar />
      <Taskbar />

      {/* floating meeting banner */}
      <div className="absolute left-[786px] top-0 h-[27px] w-[504px] flex rounded-b-[3px] overflow-hidden shadow-md font-bold text-[14.3px]" style={uiFont}>
        <div className="w-[352px] bg-[#43b000] text-[#1d4a10] flex items-center justify-center whitespace-nowrap">You are viewing Μάγια Σατρατζέμη's screen</div>
        <div className="flex-1 bg-[#1d1d20] text-[#eee] flex items-center pl-[34px] gap-[5px] text-[13.5px]">
          View Options <ChevronDown size={12} strokeWidth={3} />
        </div>
      </div>
      {/* floating view switcher */}
      <div className="absolute left-[1841px] top-[37px] w-[68px] h-[33px] rounded-[8px] bg-[#686868]/35 flex items-center justify-end pr-[8px] gap-[6px] text-[15px] text-[#ddd]" style={uiFont}>
        <svg width="14" height="13" viewBox="0 0 14 13" fill="#ddd"><path d="M0 0h4v3H0zM5 0h4v3H5zM10 0h4v3h-4zM0 4h14v9H0z" /></svg>
        <span>View</span>
      </div>
      <AnnotateBar />
    </div>
  );
}
